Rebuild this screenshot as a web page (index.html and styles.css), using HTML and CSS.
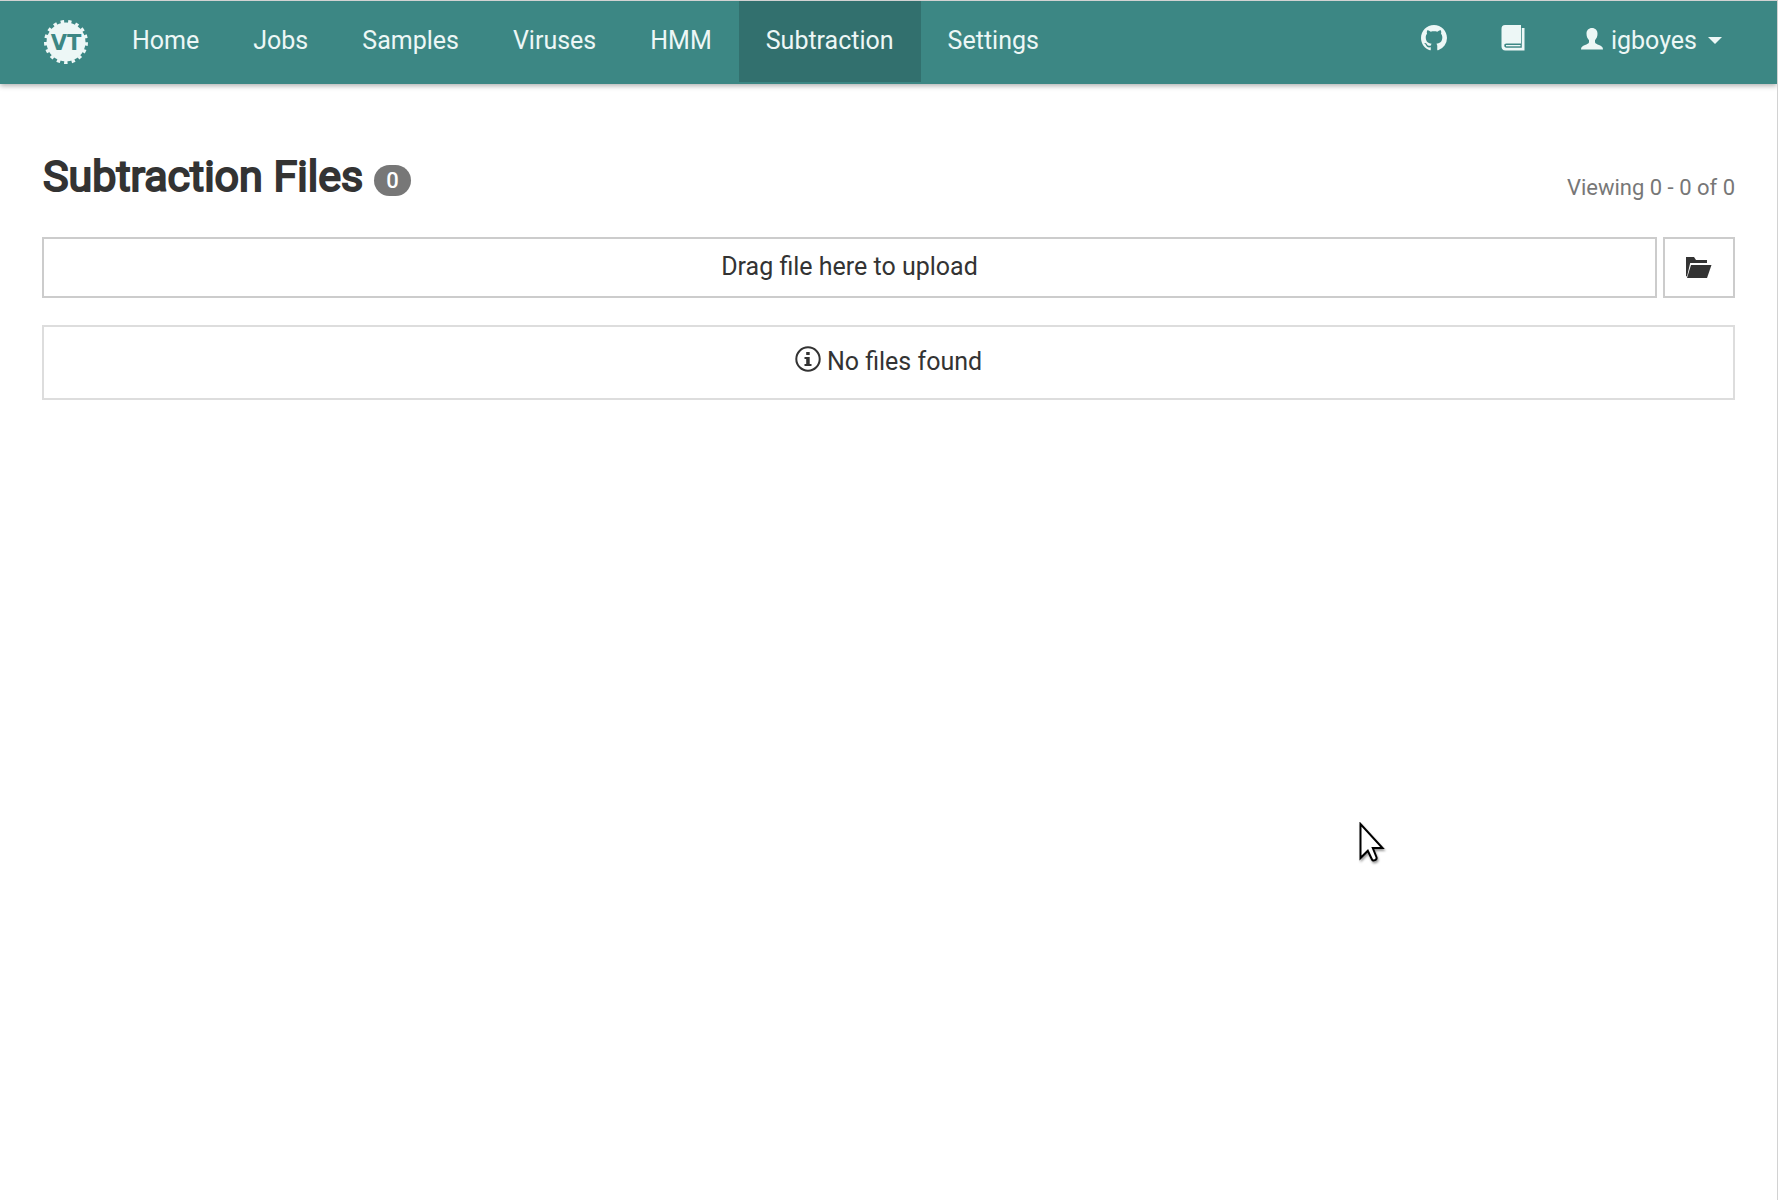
FILE: index.html
```html
<!DOCTYPE html>
<html lang="en">
<head>
<meta charset="utf-8">
<title>Virtool</title>
<link rel="stylesheet" href="styles.css">
</head>
<body>
<header class="navbar">
  <a class="brand" href="#" aria-label="Virtool">
    <svg class="logo" viewBox="0 0 44 44">
      <circle cx="22" cy="22" r="19.5" fill="currentColor"/>
      <circle cx="22" cy="22" r="20.4" fill="none" stroke="currentColor" stroke-width="3.2" pathLength="170" stroke-dasharray="4.6 5.4" transform="rotate(-84 22 22)"/>
      <text class="logo-text" x="22" y="30" text-anchor="middle">VT</text>
    </svg>
  </a>
  <nav class="links">
    <a class="link" href="#">Home</a>
    <a class="link" href="#">Jobs</a>
    <a class="link" href="#">Samples</a>
    <a class="link" href="#">Viruses</a>
    <a class="link" href="#">HMM</a>
    <a class="link active" href="#">Subtraction</a>
    <a class="link" href="#">Settings</a>
  </nav>
  <nav class="links tools">
    <a class="link" href="#" aria-label="GitHub">
      <svg class="icon raised" viewBox="0 0 16 16"><path fill="currentColor" d="M8 0C3.58 0 0 3.58 0 8c0 3.54 2.29 6.53 5.47 7.59.4.07.55-.17.55-.38 0-.19-.01-.82-.01-1.49-2.01.37-2.53-.49-2.69-.94-.09-.23-.48-.94-.82-1.13-.28-.15-.68-.52-.01-.53.63-.01 1.08.58 1.23.82.72 1.21 1.87.87 2.33.66.07-.52.28-.87.51-1.07-1.78-.2-3.64-.89-3.64-3.95 0-.87.31-1.59.82-2.15-.08-.2-.36-1.02.08-2.12 0 0 .67-.21 2.2.82.64-.18 1.32-.27 2-.27s1.36.09 2 .27c1.53-1.04 2.2-.82 2.2-.82.44 1.1.16 1.92.08 2.12.51.56.82 1.27.82 2.15 0 3.07-1.87 3.75-3.65 3.95.29.25.54.73.54 1.48 0 1.07-.01 1.93-.01 2.2 0 .21.15.46.55.38A8.01 8.01 0 0 0 16 8c0-4.42-3.58-8-8-8z"/></svg>
    </a>
    <a class="link" href="#" aria-label="Documentation">
      <svg class="icon raised" viewBox="0 0 26 26"><path fill="currentColor" d="M4 0H20V18.5H5.5C3.6 18.500 3.300 19.200 3.300 20.600C3.300 22 4 22.700 5.500 22.700H20.800V3H23.500V25.500H4.500C1.700 25.500 .5 23.800 .5 21.500V4C.5 1.500 1.700 0 4 0Z"/><path fill="currentColor" d="M5 20H19.500V21.300H5Z"/></svg>
    </a>
    <a class="link user" href="#">
      <svg class="icon person" viewBox="0 0 22 22"><path fill="currentColor" d="M11 0C14.300 0 16.500 2.200 16.500 5.800C16.500 8.700 15.500 10.500 14 12.200V14.200C14.300 15.500 16 16.200 18 17.100C20.500 18.200 22 19 22 21.500H0C0 19 1.500 18.200 4 17.100C6 16.200 7.700 15.500 8 14.200V12.200C6.500 10.500 5.500 8.700 5.500 5.800C5.500 2.200 7.700 0 11 0Z"/></svg>
      <span>igboyes</span>
      <span class="caret"></span>
    </a>
  </nav>
</header>
<main class="content">
  <div class="heading">
    <h1 class="title">Subtraction Files</h1>
    <span class="badge">0</span>
    <span class="range">Viewing 0 - 0 of 0</span>
  </div>
  <div class="upload">
    <div class="dropzone">Drag file here to upload</div>
    <button class="browse" type="button" aria-label="Browse files">
      <svg class="folder" viewBox="0 0 26 21"><path fill="currentColor" d="M0 0H8L10 3H21V6H4.200L1 19.500L0 19Z"/><path fill="currentColor" d="M5 8H25.500L21 21H1Z"/></svg>
    </button>
  </div>
  <div class="empty">
    <svg class="icon" viewBox="0 0 26 26"><circle cx="13" cy="13" r="11.700" fill="none" stroke="currentColor" stroke-width="2"/><path fill="currentColor" d="M11.200 6H14.700V9H11.200ZM9.500 11H14.700V18H16.500V20H9.500V18H11.200V13H9.500Z"/></svg>
    <span>No files found</span>
  </div>
</main>
<svg class="cursor" viewBox="0 0 28 42"><path d="M1.500 2V36L8.800 28.800L13 37.500C14 39.500 18.500 38 17.400 35L13.800 26H23.500Z" fill="#fff" stroke="#000" stroke-width="2"/></svg>
</body>
</html>
```
FILE: styles.css
```css
* { box-sizing: border-box; }

body {
  margin: 0;
  min-height: 100vh;
  border-top: 1px solid #d2d2d2;
  border-right: 1px solid #d2d2d2;
  background: #fff;
  color: #333;
  font: 25px/36px Roboto, sans-serif;
}

.navbar {
  display: flex;
  height: 83px;
  padding: 0 28px 2px 44px;
  background: #3c8784;
  box-shadow: 0 2px 5px rgba(0, 0, 0, 0.3);
  color: #edf7f6;
}

.brand {
  display: flex;
  align-items: center;
  margin-right: 17px;
  color: inherit;
}

.logo { width: 44px; height: 44px; }

.logo-text {
  fill: #3c8784;
  font: bold 21px "DejaVu Sans", sans-serif;
}

.links { display: flex; }
.tools { margin-left: auto; }

.link {
  display: flex;
  align-items: center;
  padding: 0 27px 2px;
  color: inherit;
  text-decoration: none;
}

.active { background: #32706e; }

.icon { width: 26px; height: 26px; flex: none; }
.raised { margin-bottom: 6px; }
.user { gap: 8px; }
.person { width: 22px; height: 22px; margin-bottom: 4px; }

.caret {
  margin-left: 3px;
  border: 7px solid transparent;
  border-top-color: currentColor;
  border-bottom: 0;
}

.content { padding: 65px 42px 42px; }

.heading {
  display: flex;
  align-items: center;
  margin-bottom: 34px;
}

.title {
  margin: 0 11px 0 0;
  padding-left: 1px;
  font-size: 43px;
  line-height: 54px;
  font-weight: 400;
  -webkit-text-stroke: 2px currentColor;
}

.badge {
  margin-top: 8px;
  padding: 0 12px;
  border-radius: 16px;
  background: #777;
  color: #fff;
  font-size: 22px;
  line-height: 31px;
  font-weight: 500;
}

.range {
  align-self: flex-end;
  margin-left: auto;
  color: #777;
  font-size: 22px;
  line-height: 30px;
}

.upload {
  display: flex;
  gap: 6px;
  margin-bottom: 27px;
}

.dropzone {
  flex: 1;
  padding: 10px 0 11px;
  border: 2px solid #ccc;
  text-align: center;
}

.browse {
  display: flex;
  align-items: center;
  justify-content: center;
  width: 72px;
  padding: 0;
  border: 2px solid #ccc;
  background: none;
  color: #333;
}

.folder { width: 26px; height: 21px; }

.empty {
  display: flex;
  align-items: center;
  justify-content: center;
  gap: 6px;
  height: 75px;
  padding-bottom: 2px;
  border: 2px solid #ddd;
}

.empty .icon { margin-bottom: 5px; }

.cursor {
  position: absolute;
  left: 1359px;
  top: 822px;
  width: 28px;
  height: 42px;
  filter: drop-shadow(1px 2px 1px rgba(0, 0, 0, 0.4));
}
```
